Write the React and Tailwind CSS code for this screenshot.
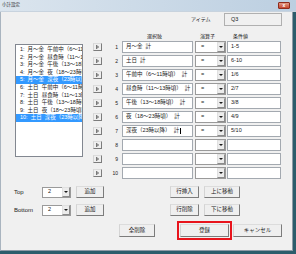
import React from "react";

const FONT = "font-['Liberation_Sans','Noto_Sans_CJK_JP',sans-serif]";

const listItems = [
  "1: 月～金 午前中（6～11時頃）",
  "2: 月～金 昼食時（11～13時頃）",
  "3: 月～金 午後（13～18時頃）",
  "4: 月～金 夜（18～23時頃）",
  "5: 月～金 深夜（23時以降）",
  "6: 土日 午前中（6～11時頃）",
  "7: 土日 昼食時（11～13時頃）",
  "8: 土日 午後（13～18時頃）",
  "9: 土日 夜（18～23時頃）",
  "10: 土日 深夜（23時以降）",
];

const rows = [
  { t: "月～金 計", op: "=", v: "1-5" },
  { t: "土日 計", op: "=", v: "6-10" },
  { t: "午前中（6～11時頃） 計", op: "=", v: "1/6" },
  { t: "昼食時（11～13時頃） 計", op: "=", v: "2/7" },
  { t: "午後（13～18時頃） 計", op: "=", v: "3/8" },
  { t: "夜（18～23時頃） 計", op: "=", v: "4/9" },
  { t: "深夜（23時以降） 計", op: "=", v: "5/10", cursor: true },
  { t: "", op: "", v: "" },
  { t: "", op: "", v: "" },
  { t: "", op: "", v: "" },
];

function Btn({ className = "", children }) {
  return (
    <div
      className={`flex items-center justify-center bg-[#efefef] border border-t-[#dcdcdc] border-l-[#d4d4d4] border-r-[#7c7c7c] border-b-[#7c7c7c] text-[5.5px] leading-none text-[#1a1a1a] whitespace-nowrap ${className}`}
    >
      {children}
    </div>
  );
}

function Arrow() {
  return (
    <div className="w-[8px] h-[10px] bg-[#ececec] border border-t-[#e0e0e0] border-l-[#e0e0e0] border-r-[#8c8c8c] border-b-[#8c8c8c] flex items-center justify-center">
      <svg width="4" height="2" viewBox="0 0 4 2">
        <path d="M0 0H4L2 2Z" fill="#1a1a1a" />
      </svg>
    </div>
  );
}

function Select({ w, h, value }) {
  return (
    <div
      className={`${w} ${h} bg-white border border-[#9a9a9a] flex items-center justify-between pl-[5px] pr-[0.5px]`}
    >
      <span className="text-[5.5px] leading-none text-[#1a1a1a]">{value}</span>
      <Arrow />
    </div>
  );
}

function Tri() {
  return (
    <svg width="3" height="4" viewBox="0 0 3 4">
      <path d="M0.4 0.4L2.6 2L0.4 3.6Z" fill="none" stroke="#333" strokeWidth="0.7" />
    </svg>
  );
}

export default function App() {
  return (
    <div className={`w-[296px] h-[254px] bg-[#2c5d6c] overflow-hidden ${FONT}`}>
      {/* title bar */}
      <div className="h-[12px] w-[296px] flex items-center justify-between bg-gradient-to-r from-[#dbe5ee] to-[#bccfe1] border-b border-[#c8d3de]">
        <span className="pl-[2px] text-[4.5px] leading-none text-[#1a1a1a]">小計設定</span>
        <div className="mr-[6px] w-[12px] h-[7px] rounded-[1px] bg-gradient-to-b from-[#e39a86] to-[#c4452f] border border-[#8e2b1d] flex items-center justify-center">
          <span className="text-[5px] leading-none text-white font-bold">x</span>
        </div>
      </div>
      <div className="flex">
        {/* body */}
        <div className="w-[293px] h-[239px] bg-[#f0f0f0] border-l border-[#a9b4bf] border-r border-r-[#8e9aa6] border-b border-b-[#8e9aa6] flex flex-col">
          {/* item row */}
          <div className="mt-[1px] h-[13px] flex items-center">
            <span className="ml-[190px] w-[33px] text-[5px] leading-none text-[#1a1a1a]">アイテム</span>
            <div className="w-[58px] h-[13px] border border-[#b0b0b0] bg-[#f0f0f0] flex items-center pl-[6px]">
              <span className="text-[5.5px] leading-none text-[#1a1a1a]">Q3</span>
            </div>
          </div>
          {/* header */}
          <div className="mt-[7px] h-[7px] flex items-center text-[5px] leading-none text-[#1a1a1a]">
            <span className="ml-[146px] w-[53px]">選択肢</span>
            <span className="w-[33px]">演算子</span>
            <span>条件値</span>
          </div>
          {/* main */}
          <div className="flex h-[140px]">
            <div className="ml-[14px] mt-[4px] w-[68px] h-[113px] bg-white border border-[#828790] overflow-hidden pt-[1px]">
              {listItems.map((t, i) => (
                <div
                  key={i}
                  className={`h-[7.6px] leading-[7.6px] whitespace-nowrap pl-[4px] text-[5.5px] [word-spacing:1.5px] ${
                    i === 4 || i === 9 ? "bg-[#3399ff] text-white" : "text-[#1a1a1a]"
                  }`}
                >
                  {t}
                </div>
              ))}
            </div>
            <div className="ml-[10px] flex flex-col">
              {rows.map((r, i) => (
                <div key={i} className="h-[14px] flex items-center">
                  <Btn className="w-[9px] h-[8px]">
                    <Tri />
                  </Btn>
                  <span className="w-[16px] text-right text-[5px] leading-none text-[#1a1a1a]">{i + 1}</span>
                  <div className="ml-[4px] w-[71px] h-[12px] bg-white border border-[#a3a9b0] flex items-center pl-[3px] overflow-hidden">
                    <span className="text-[5.5px] leading-none text-[#1a1a1a] whitespace-nowrap [word-spacing:1.5px]">{r.t}</span>
                    {r.cursor && <span className="ml-[0.5px] w-[0.5px] h-[6px] bg-black" />}
                  </div>
                  <div className="ml-[2px]">
                    <Select w="w-[31px]" h="h-[12px]" value={r.op} />
                  </div>
                  <div className="ml-[1px] w-[54px] h-[12px] bg-white border border-[#a3a9b0] flex items-center pl-[3px]">
                    <span className="text-[5.5px] leading-none text-[#1a1a1a]">{r.v}</span>
                  </div>
                </div>
              ))}
            </div>
          </div>
          {/* top row */}
          <div className="mt-[6px] h-[12px] flex items-center">
            <span className="ml-[13px] w-[28px] text-[6px] leading-none text-[#1a1a1a]">Top</span>
            <Select w="w-[29px]" h="h-[11px]" value="2" />
            <Btn className="ml-[5px] w-[28px] h-[12px]">追加</Btn>
            <Btn className="ml-[66px] w-[29px] h-[12px]">行挿入</Btn>
            <Btn className="ml-[5px] w-[36px] h-[12px]">上に移動</Btn>
          </div>
          {/* bottom row */}
          <div className="mt-[6px] h-[12px] flex items-center">
            <span className="ml-[13px] w-[28px] text-[6px] leading-none text-[#1a1a1a]">Bottom</span>
            <Select w="w-[29px]" h="h-[11px]" value="2" />
            <Btn className="ml-[5px] w-[28px] h-[12px]">追加</Btn>
            <Btn className="ml-[66px] w-[29px] h-[12px]">行削除</Btn>
            <Btn className="ml-[5px] w-[36px] h-[12px]">下に移動</Btn>
          </div>
          {/* action buttons */}
          <div className="mt-[8px] h-[13px] flex items-center">
            <Btn className="ml-[118px] w-[36px] h-[13px]">全削除</Btn>
            <div className="relative ml-[25px]">
              <Btn className="w-[49px] h-[13px]">登録</Btn>
              <span className="absolute -left-[3px] -top-[3px] -right-[3px] -bottom-[3px] border-2 border-[#e8141c]" />
            </div>
            <Btn className="ml-[4px] w-[49px] h-[13px]">キャンセル</Btn>
          </div>
        </div>
      </div>
    </div>
  );
}
